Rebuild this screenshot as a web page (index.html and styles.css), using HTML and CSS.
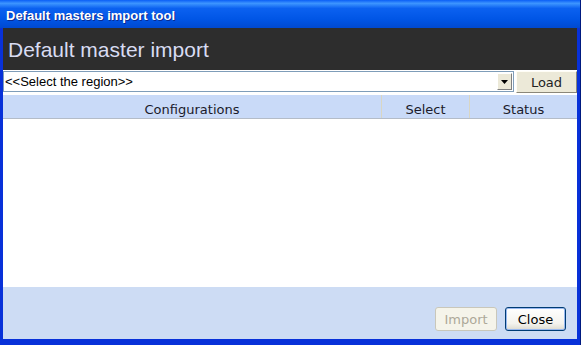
FILE: index.html
```html
<!DOCTYPE html>
<html>
	<head>
		<title>Default masters import tool</title>
		<link rel="stylesheet" href="styles.css">
	</head>
	<body>
		<div class="window">
			<div class="titlebar">Default masters import tool</div>
			<div class="frame">
				<div class="banner">Default master import</div>
				<div class="regionrow">
					<div class="combo">
						<span class="combotext">&lt;&lt;Select the region&gt;&gt;</span>
						<span class="comboarrow"><svg width="7" height="4" viewBox="0 0 7 4"><polygon points="0,0 7,0 3.5,4" fill="#000"/></svg></span>
					</div>
					<span class="btn load">Load</span>
				</div>
				<div class="grid">
					<div class="gridhead">
						<span class="col config">Configurations</span>
						<span class="col select">Select</span>
						<span class="col status">Status</span>
					</div>
					<div class="gridbody"></div>
				</div>
				<div class="footer">
					<span class="btn disabled">Import</span>
					<span class="btn close">Close</span>
				</div>
			</div>
		</div>
	</body>
</html>
```

FILE: styles.css
```css
body {
	margin: 0;
	background: #ffffff;
}

.window {
	width: 581px;
	height: 345px;
	display: flex;
	flex-direction: column;
	background: #0831d9;
	box-sizing: border-box;
	border-right: 1px solid #001a80;
}

.titlebar {
	height: 28px;
	padding-left: 6px;
	background: linear-gradient(180deg, #0a5ef6 0%, #3d95ff 12%, #0b61f0 30%, #0055e5 70%, #0049d0 100%);
	color: #ffffff;
	font: bold 13px "Liberation Sans", Arial, sans-serif;
	line-height: 31px;
	text-shadow: 1px 1px 0 #0a2a90;
}

.frame {
	flex: 1;
	display: flex;
	flex-direction: column;
	margin: 0 3px 6px 3px;
	background: #cddcf4;
}

.banner {
	height: 42px;
	padding-left: 5px;
	background: #2d2d2d;
	color: #d8dcf2;
	font: 21px "Liberation Sans", Arial, sans-serif;
	line-height: 44px;
}

.regionrow {
	display: flex;
	gap: 2px;
	padding: 1px 0 0 0;
	height: 24px;
	background: #ffffff;
}

.combo {
	width: 511px;
	height: 21px;
	box-sizing: border-box;
	border: 1px solid #7f9db9;
	background: #ffffff;
	display: flex;
	align-items: center;
}

.combotext {
	flex: 1;
	padding-left: 1px;
	font: 13px "Liberation Sans", Arial, sans-serif;
	color: #000000;
}

.comboarrow {
	width: 15px;
	height: 17px;
	margin-right: 1px;
	background: #ece9d8;
	border: 1px solid #ffffff;
	border-right-color: #808080;
	border-bottom-color: #808080;
	box-sizing: border-box;
	display: flex;
	align-items: center;
	justify-content: center;
}

.btn {
	display: flex;
	align-items: center;
	justify-content: center;
	box-sizing: border-box;
	font: 13px "DejaVu Sans", Verdana, sans-serif;
	color: #000000;
}

.load {
	width: 61px;
	height: 22px;
	background: #ece9d8;
	border: 1px solid #fffdf5;
	border-right-color: #8a877a;
	border-bottom-color: #8a877a;
	color: #222222;
}

.grid {
	flex: 1;
	display: flex;
	flex-direction: column;
	background: #ffffff;
}

.gridhead {
	display: flex;
	height: 23px;
	background: #c9daf8;
	border-bottom: 1px solid #b4bcc8;
	font: 13px "DejaVu Sans", Verdana, sans-serif;
	color: #1b1b2b;
}

.col {
	display: flex;
	align-items: center;
	justify-content: center;
	padding-top: 5px;
}

.config {
	width: 378px;
}

.select {
	width: 87px;
	border-left: 1px solid #d9d6c3;
}

.status {
	flex: 1;
	border-left: 1px solid #d9d6c3;
}

.gridbody {
	flex: 1;
}

.footer {
	height: 52px;
	display: flex;
	justify-content: flex-end;
	align-items: flex-start;
	gap: 8px;
	padding: 20px 11px 0 0;
	box-sizing: border-box;
	background: #cddcf4;
}

.disabled {
	width: 62px;
	height: 24px;
	background: #f5f4ea;
	border: 1px solid #c9c7ba;
	border-radius: 3px;
	color: #aca899;
}

.close {
	width: 61px;
	height: 24px;
	background: linear-gradient(180deg, #ffffff 0%, #f4f3ee 70%, #dcdad0 100%);
	border: 1px solid #003c74;
	border-radius: 3px;
	box-shadow: inset 0 0 0 1px #98b8f0;
}
```
